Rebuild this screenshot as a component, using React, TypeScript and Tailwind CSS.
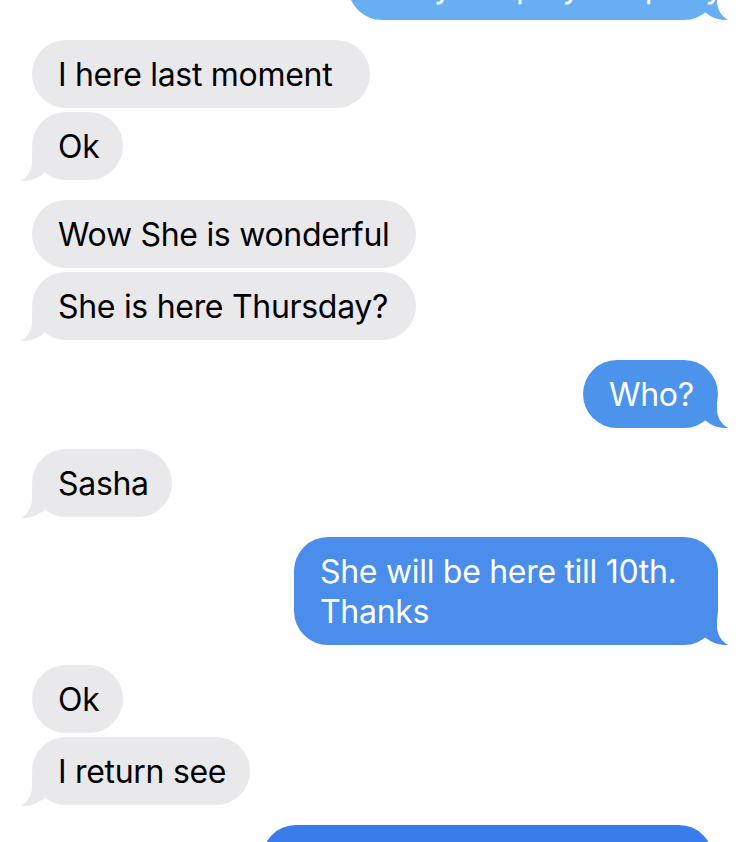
import React from 'react';

type Side = 'in' | 'out';

interface BubbleProps {
    side: Side;
    lines: string[];
    width: string;
    color?: string;
    tail?: boolean;
    className?: string;
}

const Tail: React.FC<{ side: Side; fill: string }> = ({ side, fill }) => {
    if (side === 'in') {
        return (
            <svg
                className="absolute -left-[12px] -bottom-[2px] pointer-events-none"
                width="34"
                height="34"
                viewBox="0 0 34 34"
            >
                <path
                    d="M12 2 L12 14 C12 22 8 29 1 33 C9 33.5 17 31 23 26 L34 18 L34 2 Z"
                    fill={fill}
                />
            </svg>
        );
    }
    return (
        <svg
            className="absolute -right-[11px] -bottom-[1px] pointer-events-none"
            width="34"
            height="34"
            viewBox="0 0 34 34"
        >
            <path
                d="M22 2 L22 14 C22 22 26 29 33 33 C25 33.5 17 31 11 26 L0 18 L0 2 Z"
                fill={fill}
            />
        </svg>
    );
};

const Bubble: React.FC<BubbleProps> = ({ side, lines, width, color, tail, className = '' }) => {
    const fill = side === 'in' ? '#e9e9eb' : color || '#4a8fea';
    return (
        <div className={`flex ${side === 'in' ? 'justify-start pl-[32px]' : 'justify-end pr-[32px]'} ${className}`}>
            <div
                className={`relative rounded-[34px] px-[26px] pt-[15px] pb-[13px] text-[32px] leading-[40px] tracking-[-0.3px] ${
                    side === 'in' ? 'bg-[#e9e9eb] text-black' : 'text-white'
                } ${width}`}
                style={side === 'out' ? { backgroundColor: fill } : undefined}
            >
                {tail && <Tail side={side} fill={fill} />}
                <div className="relative whitespace-nowrap">
                    {lines.map((l, i) => (
                        <div key={i}>{l}</div>
                    ))}
                </div>
            </div>
        </div>
    );
};

export default function App() {
    return (
        <div
            className="w-[750px] h-[842px] overflow-hidden bg-white flex flex-col"
            style={{ fontFamily: 'Inter, "Noto Sans", sans-serif' }}
        >
            {/* cut-off bubble at the top */}
            <Bubble side="out" lines={['Are you up by the party?']} width="w-[370px]" color="#68aef3" tail className="-mt-[48px]" />

            <div className="flex flex-col gap-[4px] mt-[20px]">
                <Bubble side="in" lines={['I here last moment']} width="w-[338px]" />
                <Bubble side="in" lines={['Ok']} width="w-[91px]" tail />
            </div>

            <div className="flex flex-col gap-[4px] mt-[20px]">
                <Bubble side="in" lines={['Wow She is wonderful']} width="w-[384px]" />
                <Bubble side="in" lines={['She is here Thursday?']} width="w-[384px]" tail />
            </div>

            <div className="mt-[20px]">
                <Bubble side="out" lines={['Who?']} width="w-[135px]" color="#4c93ec" tail />
            </div>

            <div className="mt-[21px]">
                <Bubble side="in" lines={['Sasha']} width="w-[140px]" tail />
            </div>

            <div className="mt-[20px]">
                <Bubble
                    side="out"
                    lines={['She will be here till 10th.', 'Thanks']}
                    width="w-[424px]"
                    color="#4a8dea"
                    tail
                />
            </div>

            <div className="flex flex-col gap-[4px] mt-[20px]">
                <Bubble side="in" lines={['Ok']} width="w-[91px]" />
                <Bubble side="in" lines={['I return see']} width="w-[218px]" tail />
            </div>

            <div className="mt-[20px]">
                <Bubble side="out" lines={['See you then']} width="w-[451px]" color="#3b7ceb" className="pr-[37px]" />
            </div>
        </div>
    );
}
